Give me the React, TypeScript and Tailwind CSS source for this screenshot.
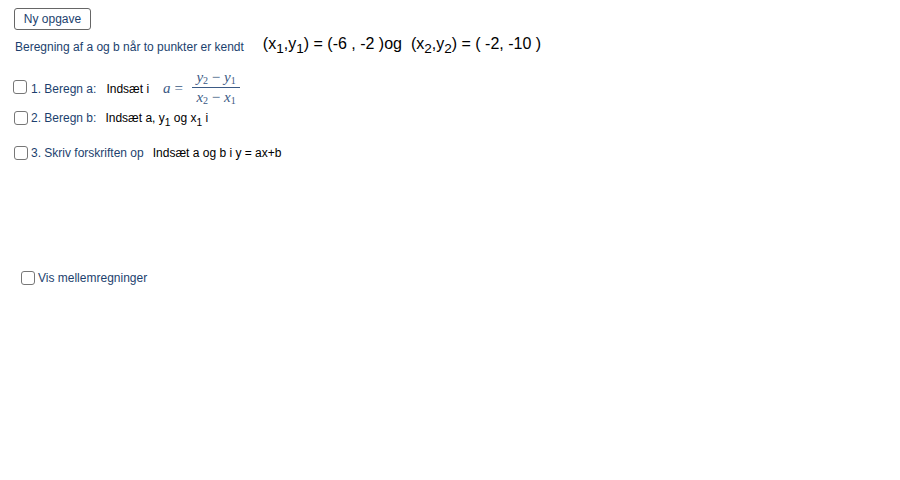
import React from 'react';

const label = 'text-[12px] text-[#1c3f6e]';

function Box() {
  return <span className="inline-block h-[14px] w-[14px] shrink-0 rounded-[3px] border-[1.5px] border-[#777] bg-white" />;
}

function Sub({ children }: { children: React.ReactNode }) {
  return <sub className="relative top-[4px] align-baseline text-[0.85em]">{children}</sub>;
}

// small upright index inside the fraction
function Idx({ children }: { children: React.ReactNode }) {
  return <span className="relative top-[2px] font-['Liberation_Serif',serif] text-[10px] not-italic">{children}</span>;
}

export default function App() {
  return (
    <div className="h-[480px] w-[900px] bg-white font-['Liberation_Sans',Arial,sans-serif] text-black">
      <div className="px-[14px] pt-[6px]">
        <button className="h-[22px] w-[77px] rounded-[3px] border border-[#666] bg-white text-[12px] text-[#1c3f6e]">Ny opgave</button>

        <div className="mt-[5px] flex items-center">
          <span className={`${label} relative top-[3px] ml-px`}>Beregning af a og b når to punkter er kendt</span>
          <span className="ml-[19px] text-[16px] leading-none">
            (x<Sub>1</Sub>,y<Sub>1</Sub>) = (-6 , -2 )og &nbsp;(x<Sub>2</Sub>,y<Sub>2</Sub>) = ( -2, -10 )
          </span>
        </div>

        <div className="mt-[16px] flex items-center">
          <span className="-ml-px"><Box /></span>
          <span className={`${label} ml-[4px]`}>1. Beregn a:</span>
          <span className="ml-[10px] text-[12px]">Indsæt i</span>
          <span className="ml-[14px] flex items-center font-['Liberation_Serif',serif] text-[15px] italic text-[#3b5a85]">
            <span>a</span>
            <span className="ml-[4px] mr-[9px] not-italic">=</span>
            <span className="flex flex-col items-center">
              <span className="px-[2px] leading-[16px]">y<Idx>2</Idx> <span className="not-italic">−</span> y<Idx>1</Idx></span>
              <span className="h-px w-[48px] bg-[#3b5a85]" />
              <span className="px-[2px] leading-[18px]">x<Idx>2</Idx> <span className="not-italic">−</span> x<Idx>1</Idx></span>
            </span>
          </span>
        </div>

        <div className="mt-[1px] flex items-center">
          <Box />
          <span className={`${label} ml-[3px]`}>2. Beregn b:</span>
          <span className="ml-[9px] text-[12px]">Indsæt a, y<Sub>1</Sub> og x<Sub>1</Sub> i</span>
        </div>

        <div className="mt-[17px] flex items-center">
          <Box />
          <span className={`${label} ml-[3px]`}>3. Skriv forskriften op</span>
          <span className="ml-[9px] text-[12px]">Indsæt a og b i y = ax+b</span>
        </div>

        <div className="ml-[7px] mt-[107px] flex items-center">
          <Box />
          <span className={`${label} ml-[3px]`}>Vis mellemregninger</span>
        </div>
      </div>
    </div>
  );
}
